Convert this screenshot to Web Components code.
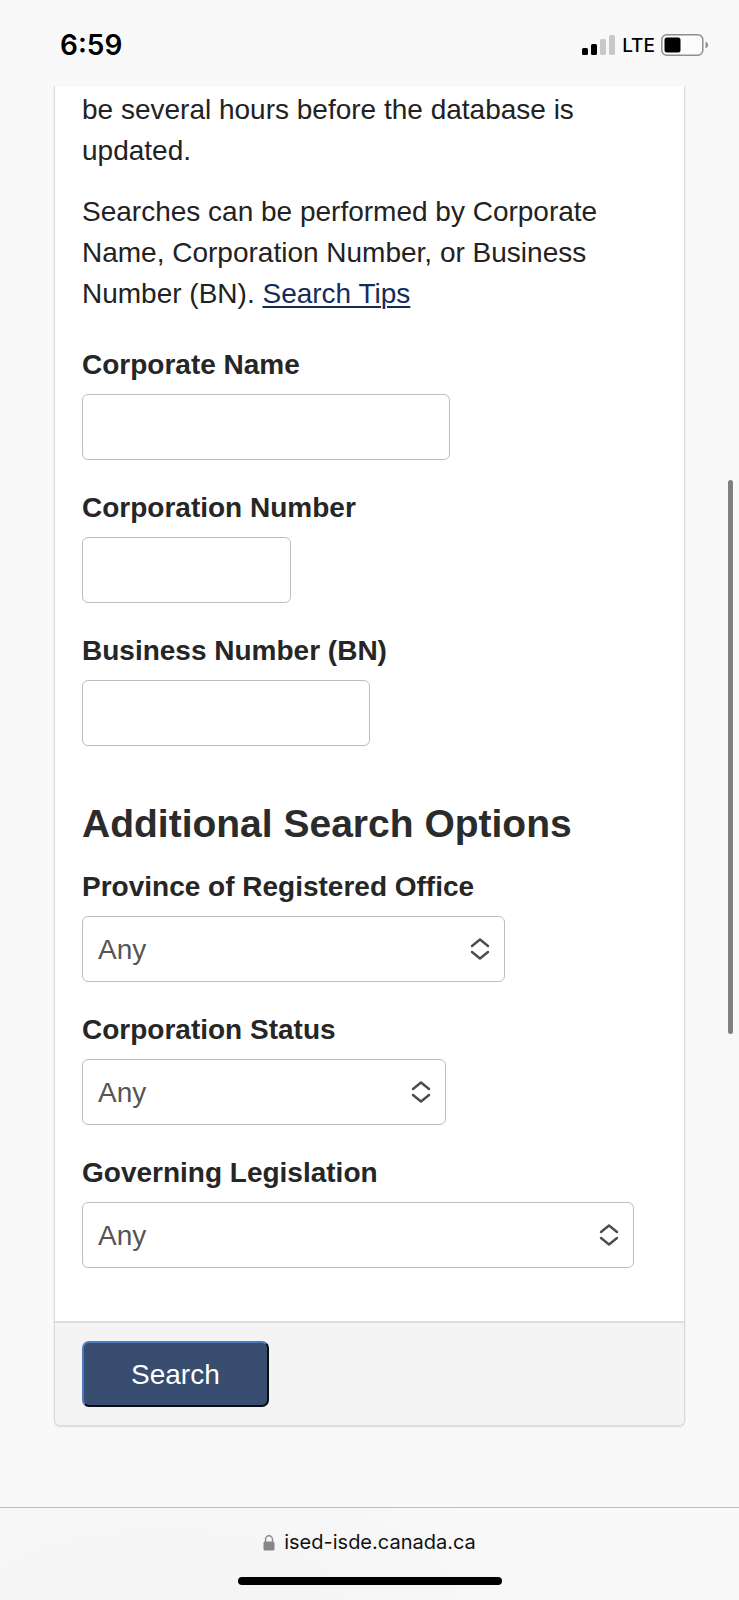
<!DOCTYPE html>
<html lang="en">
<head>
<meta charset="utf-8">
<meta name="viewport" content="width=device-width, initial-scale=1">
<title>Search for a Federal Corporation</title>
<style>
  html, body { margin: 0; }
  body { background: #f9f9f9; color: #222; font: 28px/41px "Liberation Sans", Arial, sans-serif; }
  p { margin: 0 0 20px; }
  p.last { margin-bottom: 30px; }
  a { color: #142c5c; text-decoration-thickness: 2px; text-underline-offset: 3px; }
  h2 { margin: 29px 0 20px; font-size: 39px; line-height: 44px; color: #2b2b2b; }
</style>
</head>
<body>
<phone-screen>
  <status-bar slot="top" time="6:59" network="LTE"></status-bar>
  <search-panel>
    <p>be several hours before the database is updated.</p>
    <p class="last">Searches can be performed by Corporate Name, Corporation Number, or Business <span>Number (BN). </span><a href="#tips">Search Tips</a></p>
    <text-field style="--control-width: 368px">Corporate Name</text-field>
    <text-field style="--control-width: 209px">Corporation Number</text-field>
    <text-field style="--control-width: 288px">Business Number (BN)</text-field>
    <h2>Additional Search Options</h2>
    <select-field style="--control-width: 423px">Province of Registered Office</select-field>
    <select-field style="--control-width: 364px">Corporation Status</select-field>
    <select-field style="--control-width: 552px">Governing Legislation</select-field>
    <submit-button slot="footer">Search</submit-button>
  </search-panel>
  <address-bar slot="bottom">ised-isde.canada.ca</address-bar>
</phone-screen>

<script>
const define = (name, html) => {
  const template = document.createElement('template');
  template.innerHTML = html;
  customElements.define(name, class extends HTMLElement {
    constructor() {
      super();
      this.attachShadow({ mode: 'open' }).append(template.content.cloneNode(true));
    }
    connectedCallback() {
      for (const node of this.shadowRoot.querySelectorAll('[data-attr]')) {
        node.textContent = this.getAttribute(node.dataset.attr) || '';
      }
    }
  });
};

define('phone-screen', `
  <style>
    :host { display: flex; flex-direction: column; min-height: 100vh; position: relative; }
    main { flex: 1; padding: 0 54px 80px; }
    .thumb { position: absolute; top: 30%; right: 6px; width: 5px; height: 554px; border-radius: 3px; background: #7f7f7f; }
  </style>
  <slot name="top"></slot>
  <main><slot></slot></main>
  <slot name="bottom"></slot>
  <div class="thumb"></div>
`);

define('status-bar', `
  <style>
    :host { display: flex; justify-content: space-between; align-items: center; box-sizing: border-box;
      height: 86px; padding: 4px 30px 0 60px; color: #000; font-family: Inter, sans-serif; }
    .time { font-size: 28px; font-weight: 600; }
    .status { display: flex; align-items: center; gap: 6px; font-size: 19px; font-weight: 500; }
    svg { display: block; }
  </style>
  <span class="time" data-attr="time"></span>
  <div class="status">
    <svg width="34" height="22" viewBox="0 0 34 22" aria-hidden="true">
      <rect x="0" y="14" width="6" height="7" rx="1.500"/>
      <rect x="9" y="10" width="6" height="11" rx="1.500"/>
      <rect x="18" y="5" width="6" height="16" rx="1.500" fill="#c8c8c8"/>
      <rect x="27" y="1" width="6" height="20" rx="1.500" fill="#c8c8c8"/>
    </svg>
    <span data-attr="network"></span>
    <svg width="48" height="22" viewBox="0 0 48 22" aria-hidden="true">
      <rect x="0.800" y="0.800" width="41" height="20.400" rx="5" fill="#fcfcfc" stroke="#8e8e8e" stroke-width="1.500"/>
      <rect x="3.500" y="3.500" width="16" height="15" rx="2.500"/>
      <path d="M44.500 7.500 Q47.200 8.500 47.200 11 Q47.200 13.500 44.500 14.500 Z" fill="#8e8e8e"/>
    </svg>
  </div>
`);

define('search-panel', `
  <style>
    :host { display: block; border: 1px solid #d9d9d9; border-top: 0; border-radius: 0 0 6px 6px;
      background: #fff; box-shadow: 0 1px 2px rgba(0, 0, 0, .12); }
    form { margin: 0; }
    .body { display: flow-root; padding: 3px 27px 26px; }
    footer { padding: 18px 27px; border-top: 2px solid #ddd; border-radius: 0 0 5px 5px; background: #f4f4f4; }
  </style>
  <form>
    <div class="body"><slot></slot></div>
    <footer><slot name="footer"></slot></footer>
  </form>
`);

const fieldStyle = `
  <style>
    :host { display: block; padding-bottom: 27px; }
    label { display: block; margin-bottom: 9px; font-weight: 700; color: #262626; }
    .control { display: grid; align-items: center; width: var(--control-width); max-width: 100%; }
    input, select { grid-area: 1 / 1; box-sizing: border-box; width: 100%; height: 66px; margin: 0;
      padding: 0 15px; border: 1px solid #bebebe; border-radius: 6px; background: #fff; color: #555;
      font: inherit; line-height: 41px; appearance: none; }
    svg { grid-area: 1 / 1; justify-self: end; margin-right: 15px; pointer-events: none; }
  </style>`;

define('text-field', `${fieldStyle}
  <label for="control"><slot></slot></label>
  <div class="control"><input id="control" type="text"></div>
`);

define('select-field', `${fieldStyle}
  <label for="control"><slot></slot></label>
  <div class="control">
    <select id="control"><option>Any</option></select>
    <svg width="20" height="22" viewBox="0 0 20 22" fill="none" stroke="#4d4d4d" stroke-width="2.400" stroke-linecap="round" stroke-linejoin="round" aria-hidden="true">
      <path d="M2 8 L10 1.500 L18 8 M2 14 L10 20.500 L18 14"/>
    </svg>
  </div>
`);

define('submit-button', `
  <style>
    :host { display: block; }
    button { display: block; box-sizing: border-box; height: 66px; padding: 0 47px; font: inherit; color: #fff;
      background: #384d6f; border: 2px solid; border-color: #4f7abd #0a0d14 #0a0d14 #4f7abd; border-radius: 7px; }
  </style>
  <button type="button"><slot></slot></button>
`);

define('address-bar', `
  <style>
    :host { display: flex; flex-direction: column; align-items: center; gap: 20px; box-sizing: border-box;
      padding: 20px 0 15px; border-top: 1px solid #bdbdbd; color: #111;
      background: radial-gradient(ellipse 400px 160px at 22% 100%, #f5f5f5 30%, #f9f9f9 100%);
      font: 20px/29px Inter, sans-serif; }
    .url { display: flex; align-items: center; gap: 9px; }
    svg { display: block; }
    .home { width: 264px; max-width: 60%; height: 8px; border-radius: 4px; background: #000; }
  </style>
  <div class="url">
    <svg width="12" height="16" viewBox="0 0 12 16" aria-hidden="true">
      <path d="M2.500 7 V4.500 A3.500 3.700 0 0 1 9.500 4.500 V7" fill="none" stroke="#86858a" stroke-width="1.400"/>
      <rect x="0.500" y="6.500" width="11" height="9" rx="1.500" fill="#86858a"/>
    </svg>
    <span><slot></slot></span>
  </div>
  <div class="home"></div>
`);
</script>
</body>
</html>
